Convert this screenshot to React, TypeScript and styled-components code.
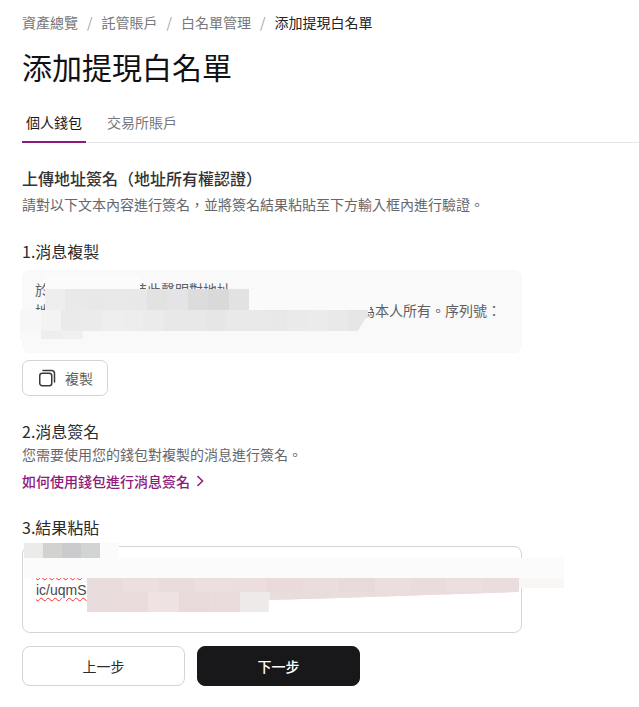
import styled, { createGlobalStyle } from "styled-components";

const GlobalStyle = createGlobalStyle`
  html, body {
    margin: 0;
    padding: 0;
    background: #fff;
  }
  body {
    font-family: "Noto Sans CJK TC", "Liberation Sans", sans-serif;
    color: #1a1a1c;
  }
`;

const Page = styled.div`
  position: relative;
  width: 639px;
  height: 707px;
  overflow: hidden;
  box-sizing: border-box;
  padding: 13px 0 0 22px;
`;

const Breadcrumb = styled.nav`
  display: flex;
  align-items: center;
  height: 18px;
  font-size: 14px;
  line-height: 18px;
  color: #77777c;
`;

const Slash = styled.span`
  margin: 0 9px;
  color: #a5a5aa;
`;

const Current = styled.span`
  color: #232326;
`;

const Title = styled.h1`
  margin: 14px 0 0;
  font-size: 30px;
  line-height: 42px;
  font-weight: 400;
  color: #111113;
`;

const Tabs = styled.div`
  display: flex;
  margin-top: 17px;
  height: 38px;
  border-bottom: 1px solid #e6e6e8;
`;

const Tab = styled.div<{ $active?: boolean }>`
  box-sizing: border-box;
  width: ${(p) => (p.$active ? "64px" : "auto")};
  height: 39px;
  margin-right: 21px;
  text-align: center;
  font-size: 14px;
  line-height: 36px;
  color: ${(p) => (p.$active ? "#1a1a1c" : "#77777c")};
  border-bottom: 2px solid ${(p) => (p.$active ? "#8e1a7d" : "transparent")};
`;

const Section = styled.section<{ $top: number }>`
  margin-top: ${(p) => p.$top}px;
  width: 500px;
`;

const Heading = styled.h2<{ $strong?: boolean }>`
  margin: 0;
  font-size: 16px;
  line-height: 22px;
  font-weight: ${(p) => (p.$strong ? 500 : 400)};
  color: ${(p) => (p.$strong ? "#333336" : "#2b2b2e")};
`;

const Hint = styled.p`
  margin: 5px 0 0;
  font-size: 14px;
  line-height: 20px;
  color: #66666b;
`;

const StepHint = styled(Hint)`
  margin-top: 2px;
`;

const MessageBox = styled.div`
  box-sizing: border-box;
  height: 83px;
  margin-top: 8px;
  padding: 9px 21px 0 13px;
  background: #f9f9f9;
  border-radius: 8px;
  font-size: 14px;
  line-height: 21px;
  color: #5f5f64;
`;

const SplitLine = styled.div`
  display: flex;
  justify-content: space-between;
`;

const LeadLine = styled.div`
  display: flex;
  gap: 84px;
`;

const CopyButton = styled.button`
  display: flex;
  align-items: center;
  gap: 9px;
  box-sizing: border-box;
  width: 86px;
  height: 36px;
  margin-top: 7px;
  padding: 0 0 0 15px;
  background: #fff;
  border: 1px solid #d4d4d7;
  border-radius: 7px;
  font: inherit;
  font-size: 14px;
  color: #5f5f64;
`;

const HelpLink = styled.a`
  display: flex;
  align-items: center;
  gap: 5px;
  margin-top: 7px;
  font-size: 14px;
  line-height: 20px;
  font-weight: 500;
  color: #8e1a7d;
`;

const ResultBox = styled.div`
  box-sizing: border-box;
  height: 87px;
  margin-top: 8px;
  padding: 12px 13px 0;
  border: 1px solid #d4d4d7;
  border-radius: 8px;
  font-family: "Liberation Sans", sans-serif;
  font-size: 14px;
  line-height: 21px;
  color: #4a4a4e;
`;

const Misspelt = styled.span`
  text-decoration: underline wavy #ff2a2a 1px;
  text-underline-offset: 2px;
`;

const Actions = styled.div`
  display: flex;
  gap: 12px;
  margin-top: 13px;
`;

const ActionButton = styled.button<{ $primary?: boolean }>`
  box-sizing: border-box;
  width: 163px;
  height: 40px;
  padding: 0;
  border-radius: 8px;
  border: 1px solid ${(p) => (p.$primary ? "#18181b" : "#d4d4d7")};
  background: ${(p) => (p.$primary ? "#18181b" : "#fff")};
  color: ${(p) => (p.$primary ? "#fff" : "#2b2b2e")};
  font: inherit;
  font-size: 14px;
  font-weight: ${(p) => (p.$primary ? 500 : 400)};
`;

/* mosaic censoring laid over the text */
const Patch = styled.div<{ $x: number; $y: number; $w: number; $h: number; $bg: string; $clip?: string }>`
  position: absolute;
  left: ${(p) => p.$x}px;
  top: ${(p) => p.$y}px;
  width: ${(p) => p.$w}px;
  height: ${(p) => p.$h}px;
  background: ${(p) => p.$bg};
  display: flex;
  ${(p) => (p.$clip ? `clip-path: ${p.$clip};` : "")}
`;

const Tile = styled.div<{ $w: number; $bg: string }>`
  flex: none;
  width: ${(p) => p.$w}px;
  height: 100%;
  background: ${(p) => p.$bg};
`;

function Tiles({ colors, width }: { colors: string[]; width: number }) {
  return (
    <>
      {colors.map((c, i) => (
        <Tile key={i} $w={width} $bg={c} />
      ))}
    </>
  );
}

function CopyIcon() {
  return (
    <svg width="18" height="18" viewBox="0 0 18 18" fill="none" stroke="#3a3a3e" strokeWidth="1.5">
      <rect x="1.75" y="4.25" width="12" height="12.5" rx="2.5" />
      <path d="M5 1.5h8.5a3 3 0 0 1 3 3V13" strokeLinecap="round" />
    </svg>
  );
}

function Chevron() {
  return (
    <svg width="10" height="14" viewBox="0 0 10 14" fill="none" stroke="#8e1a7d" strokeWidth="1.5">
      <path d="M2.5 2l5 5-5 5" />
    </svg>
  );
}

export default function App() {
  return (
    <Page>
      <GlobalStyle />
      <Breadcrumb>
        <span>資產總覽</span>
        <Slash>/</Slash>
        <span>託管賬戶</span>
        <Slash>/</Slash>
        <span>白名單管理</span>
        <Slash>/</Slash>
        <Current>添加提現白名單</Current>
      </Breadcrumb>
      <Title>添加提現白名單</Title>
      <Tabs>
        <Tab $active>個人錢包</Tab>
        <Tab>交易所賬戶</Tab>
      </Tabs>

      <Section $top={24}>
        <Heading $strong>上傳地址簽名（地址所有權認證）</Heading>
        <Hint>請對以下文本內容進行簽名，並將簽名結果粘貼至下方輸入框內進行驗證。</Hint>
      </Section>

      <Section $top={26}>
        <Heading>1.消息複製</Heading>
        <MessageBox>
          <LeadLine>
            <span>於</span>
            <span>特此聲明對地址</span>
          </LeadLine>
          <SplitLine>
            <span>地</span>
            <span>為本人所有。序列號：</span>
          </SplitLine>
        </MessageBox>
        <CopyButton>
          <CopyIcon />
          複製
        </CopyButton>
      </Section>

      <Section $top={24}>
        <Heading>2.消息簽名</Heading>
        <StepHint>您需要使用您的錢包對複製的消息進行簽名。</StepHint>
        <HelpLink>
          如何使用錢包進行消息簽名
          <Chevron />
        </HelpLink>
      </Section>

      <Section $top={25}>
        <Heading>3.結果粘貼</Heading>
        <ResultBox>
          <Misspelt>&nbsp;&nbsp;&nbsp;&nbsp;&nbsp;&nbsp;&nbsp;&nbsp;&nbsp;&nbsp;&nbsp;&nbsp;</Misspelt>
          <br />
          <Misspelt>ic/uqmS</Misspelt>
        </ResultBox>
        <Actions>
          <ActionButton>上一步</ActionButton>
          <ActionButton $primary>下一步</ActionButton>
        </Actions>
      </Section>

      <Patch $x={45} $y={275} $w={95} $h={14} $bg="#fbfbfb" />
      <Patch $x={249} $y={289} $w={121} $h={21} $bg="#fafafa" />
      <Patch $x={45} $y={289} $w={204} $h={21} $bg="#e8e8e9">
        <Tiles
          width={20.4}
          colors={["#eeeeef", "#e9e9ea", "#e8e8ea", "#e9e9e9", "#e8e8e9", "#e2e2e3", "#e4e4e6", "#dcdcdc", "#d9d9d9", "#e2e2e3"]}
        />
      </Patch>
      <Patch $x={20} $y={310} $w={348} $h={21} $bg="#eeeeef" $clip="polygon(0 0, 100% 0, 100% 20%, 97% 100%, 0 100%)">
        <Tiles
          width={20.5}
          colors={["#f7f7f7", "#f3f3f4", "#eaeaeb", "#ebebec", "#eeeeef", "#ededee", "#ebebeb", "#e8e8e9", "#e8e8e8", "#e6e6e7", "#e9e9e9", "#e9e9ea", "#e8e8e8", "#eaeaeb", "#ebebec", "#e9e9ea", "#e6e6e6"]}
        />
      </Patch>
      <Patch $x={20} $y={331} $w={63} $h={8} $bg="#f0f0f1">
        <Tiles width={21} colors={["#f9f9f9", "#eeeeef", "#f0f0f1"]} />
      </Patch>

      <Patch $x={24} $y={543} $w={90} $h={15} $bg="#fff">
        <Tiles width={19} colors={["#ebebea", "#d2d2d0", "#cbcbcd", "#d2d4d3", "#fbfbfb"]} />
      </Patch>
      <Patch $x={24} $y={558} $w={540} $h={20} $bg="#fbfbfb" />
      <Patch $x={87} $y={578} $w={432} $h={14} $bg="#ebdddd">
        <Tiles
          width={36}
          colors={["#e9dcdc", "#ecdfdf", "#eadcdc", "#ebdfdf", "#ecdede", "#eadada", "#ebdddd", "#e9dada", "#ecdede", "#eadcdc", "#ecdfdf", "#ebdddd"]}
        />
      </Patch>
      <Patch $x={519} $y={578} $w={45} $h={10} $bg="#f9f7f6" />
      <Patch $x={87} $y={592} $w={432} $h={20} $bg="#ebdddd" $clip="polygon(0 0, 100% 0, 58% 30%, 42% 40%, 42% 100%, 0 100%)">
        <Tiles width={30.5} colors={["#e9dcdc", "#eadcdc", "#efe2e2", "#e8dada", "#eadcdc", "#eeeaea", "#e9dcdc", "#e9dcdc", "#ebdddd", "#ebdddd", "#ebdddd", "#ebdddd", "#ebdddd", "#ebdddd"]} />
      </Patch>
    </Page>
  );
}
